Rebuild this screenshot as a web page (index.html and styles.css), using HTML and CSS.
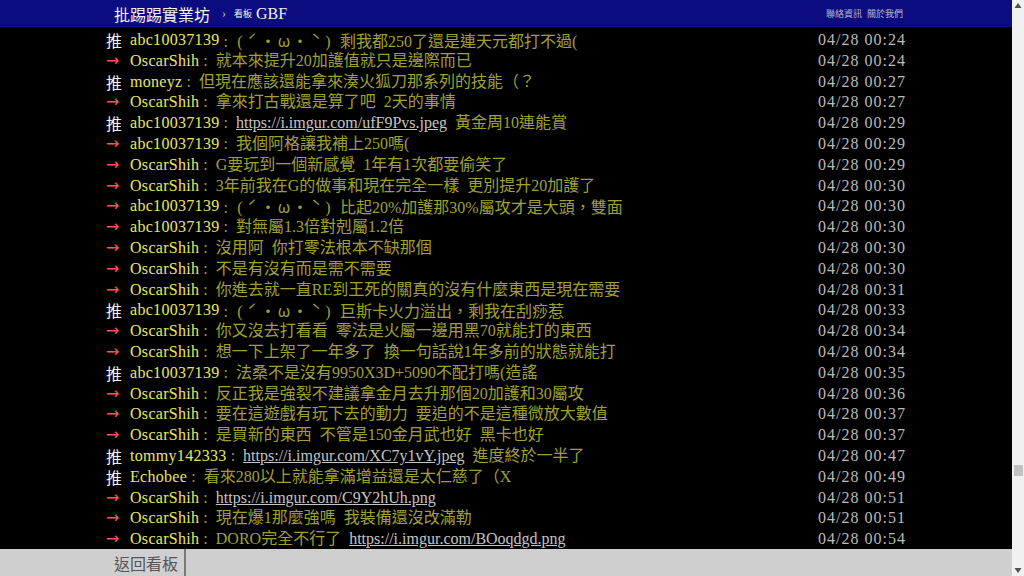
FILE: index.html
```html
<html><head>
	<meta charset="utf-8">
	<title>[閒聊] GBF - 看板 GBF - 批踢踢實業坊</title>
	<link rel="stylesheet" href="styles.css">
</head>
<body>
	<div class="page">
		<!--頂部導覽-->
		<div class="topbar">
			<div class="topbar-inner">
				<a href="#" class="logo">批踢踢實業坊</a>
				<span class="sep">›</span>
				<a href="#" class="board"><span class="board-label">看板</span> GBF</a>
				<div class="topbar-right">
					<a href="#">聯絡資訊</a>
					<a href="#">關於我們</a>
				</div>
			</div>
		</div>

		<!--推文-->
		<div class="screen">
			<div class="screen-inner">
				<div class="push"><span class="push-tag hl">推</span><span class="push-userid">abc10037139</span><span class="push-content">: <span class="kao"><i class="h">(</i><i>ˊ</i><i>・</i><i>ω</i><i>・</i><i>ˋ</i><i class="h">)</i></span> 剩我都250了還是連天元都打不過(</span><span class="push-ipdatetime">04/28 00:24</span></div>
				<div class="push"><span class="push-tag arrow">→</span><span class="push-userid">OscarShih</span><span class="push-content">: 就本來提升20加護值就只是邊際而已</span><span class="push-ipdatetime">04/28 00:24</span></div>
				<div class="push"><span class="push-tag hl">推</span><span class="push-userid">moneyz</span><span class="push-content">: 但現在應該還能拿來湊火狐刀那系列的技能（？</span><span class="push-ipdatetime">04/28 00:27</span></div>
				<div class="push"><span class="push-tag arrow">→</span><span class="push-userid">OscarShih</span><span class="push-content">: 拿來打古戰還是算了吧 2天的事情</span><span class="push-ipdatetime">04/28 00:27</span></div>
				<div class="push"><span class="push-tag hl">推</span><span class="push-userid">abc10037139</span><span class="push-content">: <a href="#">https://i.imgur.com/ufF9Pvs.jpeg</a> 黃金周10連能賞</span><span class="push-ipdatetime">04/28 00:29</span></div>
				<div class="push"><span class="push-tag arrow">→</span><span class="push-userid">abc10037139</span><span class="push-content">: 我個阿格讓我補上250嗎(</span><span class="push-ipdatetime">04/28 00:29</span></div>
				<div class="push"><span class="push-tag arrow">→</span><span class="push-userid">OscarShih</span><span class="push-content">: G要玩到一個新感覺 1年有1次都要偷笑了</span><span class="push-ipdatetime">04/28 00:29</span></div>
				<div class="push"><span class="push-tag arrow">→</span><span class="push-userid">OscarShih</span><span class="push-content">: 3年前我在G的做事和現在完全一樣 更別提升20加護了</span><span class="push-ipdatetime">04/28 00:30</span></div>
				<div class="push"><span class="push-tag arrow">→</span><span class="push-userid">abc10037139</span><span class="push-content">: <span class="kao"><i class="h">(</i><i>ˊ</i><i>・</i><i>ω</i><i>・</i><i>ˋ</i><i class="h">)</i></span> 比起20%加護那30%屬攻才是大頭，雙面</span><span class="push-ipdatetime">04/28 00:30</span></div>
				<div class="push"><span class="push-tag arrow">→</span><span class="push-userid">abc10037139</span><span class="push-content">: 對無屬1.3倍對剋屬1.2倍</span><span class="push-ipdatetime">04/28 00:30</span></div>
				<div class="push"><span class="push-tag arrow">→</span><span class="push-userid">OscarShih</span><span class="push-content">: 沒用阿 你打零法根本不缺那個</span><span class="push-ipdatetime">04/28 00:30</span></div>
				<div class="push"><span class="push-tag arrow">→</span><span class="push-userid">OscarShih</span><span class="push-content">: 不是有沒有而是需不需要</span><span class="push-ipdatetime">04/28 00:30</span></div>
				<div class="push"><span class="push-tag arrow">→</span><span class="push-userid">OscarShih</span><span class="push-content">: 你進去就一直RE到王死的關真的沒有什麼東西是現在需要</span><span class="push-ipdatetime">04/28 00:31</span></div>
				<div class="push"><span class="push-tag hl">推</span><span class="push-userid">abc10037139</span><span class="push-content">: <span class="kao"><i class="h">(</i><i>ˊ</i><i>・</i><i>ω</i><i>・</i><i>ˋ</i><i class="h">)</i></span> 巨斯卡火力溢出，剩我在刮痧惹</span><span class="push-ipdatetime">04/28 00:33</span></div>
				<div class="push"><span class="push-tag arrow">→</span><span class="push-userid">OscarShih</span><span class="push-content">: 你又沒去打看看 零法是火屬一邊用黑70就能打的東西</span><span class="push-ipdatetime">04/28 00:34</span></div>
				<div class="push"><span class="push-tag arrow">→</span><span class="push-userid">OscarShih</span><span class="push-content">: 想一下上架了一年多了 換一句話說1年多前的狀態就能打</span><span class="push-ipdatetime">04/28 00:34</span></div>
				<div class="push"><span class="push-tag hl">推</span><span class="push-userid">abc10037139</span><span class="push-content">: 法桑不是沒有9950X3D+5090不配打嗎(造謠</span><span class="push-ipdatetime">04/28 00:35</span></div>
				<div class="push"><span class="push-tag arrow">→</span><span class="push-userid">OscarShih</span><span class="push-content">: 反正我是強裂不建議拿金月去升那個20加護和30屬攻</span><span class="push-ipdatetime">04/28 00:36</span></div>
				<div class="push"><span class="push-tag arrow">→</span><span class="push-userid">OscarShih</span><span class="push-content">: 要在這遊戲有玩下去的動力 要追的不是這種微放大數值</span><span class="push-ipdatetime">04/28 00:37</span></div>
				<div class="push"><span class="push-tag arrow">→</span><span class="push-userid">OscarShih</span><span class="push-content">: 是買新的東西 不管是150金月武也好 黑卡也好</span><span class="push-ipdatetime">04/28 00:37</span></div>
				<div class="push"><span class="push-tag hl">推</span><span class="push-userid">tommy142333</span><span class="push-content">: <a href="#">https://i.imgur.com/XC7y1vY.jpeg</a> 進度終於一半了</span><span class="push-ipdatetime">04/28 00:47</span></div>
				<div class="push"><span class="push-tag hl">推</span><span class="push-userid">Echobee</span><span class="push-content">: 看來280以上就能拿滿增益還是太仁慈了（X</span><span class="push-ipdatetime">04/28 00:49</span></div>
				<div class="push"><span class="push-tag arrow">→</span><span class="push-userid">OscarShih</span><span class="push-content">: <a href="#">https://i.imgur.com/C9Y2hUh.png</a></span><span class="push-ipdatetime">04/28 00:51</span></div>
				<div class="push"><span class="push-tag arrow">→</span><span class="push-userid">OscarShih</span><span class="push-content">: 現在爆1那麼強嗎 我裝備還沒改滿勒</span><span class="push-ipdatetime">04/28 00:51</span></div>
				<div class="push"><span class="push-tag arrow">→</span><span class="push-userid">OscarShih</span><span class="push-content">: DORO完全不行了 <a href="#">https://i.imgur.com/BOoqdgd.png</a></span><span class="push-ipdatetime">04/28 00:54</span></div>
			</div>
		</div>

		<!--底部按鈕-->
		<div class="bottombar">
			<div class="bottombar-inner">
				<a href="#" class="btn">返回看板</a>
				<span class="divider"></span>
			</div>
		</div>
	</div>

	<!--捲軸-->
	<div class="scrollbar">
		<svg class="sb-arrow" width="12" height="12" viewBox="0 0 12 12"><polygon points="6,3 9.5,8 2.5,8" fill="#505050"/></svg>
		<div class="sb-track"><div class="sb-thumb"></div></div>
		<svg class="sb-arrow" width="12" height="12" viewBox="0 0 12 12"><polygon points="2.5,4 9.5,4 6,9" fill="#505050"/></svg>
	</div>
</body></html>
```

FILE: styles.css
```css
* {
	margin: 0;
	padding: 0;
}

body {
	display: flex;
	height: 576px;
	overflow: hidden;
	background: #000;
	font-family: "Liberation Serif", "Noto Sans CJK TC", serif;
	font-size: 16px;
}

a {
	color: inherit;
	text-decoration: none;
}

.page {
	width: 1012px;
	display: flex;
	flex-direction: column;
}

/* 頂部 */
.topbar {
	height: 27px;
	background: #0c0c80;
	flex: none;
}
.topbar-inner {
	width: 800px;
	height: 27px;
	margin: 0 auto;
	padding: 0 3px 0 8px;
	box-sizing: border-box;
	display: flex;
	align-items: center;
}
.logo {
	color: #f2f2f2;
	font-size: 16px;
}
.sep {
	color: #c8c8c8;
	font-size: 12px;
	margin: 0 8px 0 12px;
}
.board {
	color: #f2f2f2;
	font-size: 16px;
}
.board-label {
	font-size: 9px;
	vertical-align: 2px;
}
.topbar-right {
	margin-left: auto;
	display: flex;
	gap: 5px;
	font-size: 9px;
	color: #b8b8d8;
}

/* 推文 */
.screen {
	flex: 1;
	overflow: hidden;
	display: flex;
	flex-direction: column;
	justify-content: flex-end;
}
.screen-inner {
	width: 800px;
	margin: 0 auto;
}
.push {
	display: flex;
	height: 20.8px;
	box-sizing: border-box;
	padding-top: 2px;
	line-height: 18.8px;
	white-space: nowrap;
}
.push-tag {
	width: 24px;
	flex: none;
	font-family: "Noto Sans CJK TC", sans-serif;
}
.push-tag.hl {
	color: #f4f4f4;
}
.push-tag.arrow {
	color: #f55;
	font-family: "DejaVu Sans", sans-serif;
}
.push-userid {
	color: #e8e860;
	letter-spacing: 0.3px;
}
.push-content {
	color: #a0a030;
	flex: 1;
	word-spacing: 4px;
	padding-left: 4px;
}
.push-content a {
	color: #c4c4c4;
	text-decoration: underline;
	word-spacing: 0;
}
.kao i {
	display: inline-block;
	width: 16px;
	text-align: center;
	font-style: normal;
	font-family: "Noto Sans CJK TC", sans-serif;
}
.kao i.h {
	width: 8px;
	font-family: "Liberation Serif", serif;
}
.push-ipdatetime {
	color: #bbb;
	flex: none;
	letter-spacing: 1px;
}

/* 底部 */
.bottombar {
	height: 27px;
	background: #cfcfcf;
	flex: none;
}
.bottombar-inner {
	width: 800px;
	height: 27px;
	margin: 0 auto;
	padding-left: 8px;
	box-sizing: border-box;
	display: flex;
	align-items: center;
}
.btn {
	color: #555;
	font-size: 16px;
	width: 70px;
}
.divider {
	width: 2px;
	height: 27px;
	background: #7a7a7a;
}

/* 捲軸 */
.scrollbar {
	width: 12px;
	background: #f1f1f1;
	display: flex;
	flex-direction: column;
	flex: none;
}
.sb-arrow {
	flex: none;
}
.sb-track {
	flex: 1;
	position: relative;
}
.sb-thumb {
	position: absolute;
	left: 2px;
	right: 1px;
	top: 453px;
	height: 11px;
	background: #c1c1c1;
}
```
